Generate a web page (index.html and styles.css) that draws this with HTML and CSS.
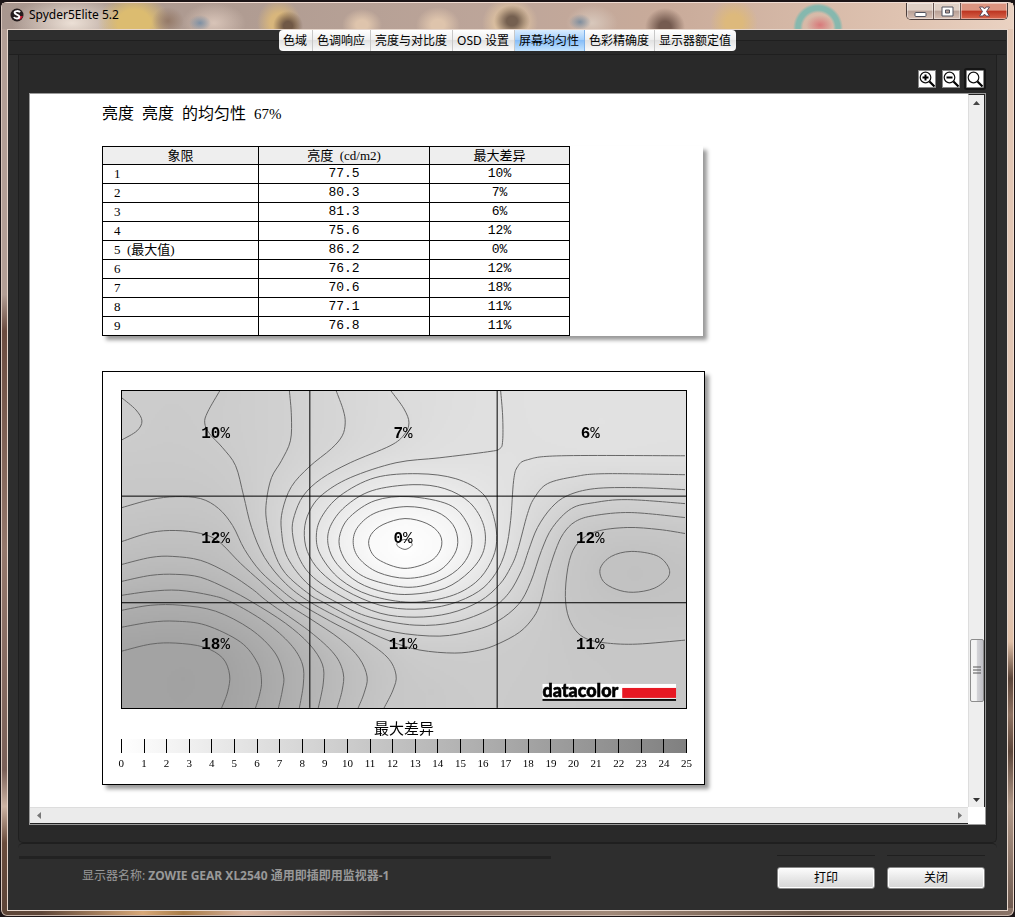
FILE: index.html
```html
<!DOCTYPE html>
<html lang="zh-CN">
<head>
<meta charset="utf-8">
<title>Spyder5Elite 5.2</title>
<link rel="stylesheet" href="styles.css">
</head>
<body>
<div class="window">
  <header class="titlebar">
    <svg class="app-icon" viewBox="0 0 14 14" aria-hidden="true">
      <circle cx="7" cy="7" r="6.5" fill="#231c1d"/>
      <path d="M8 8h5a6 6 0 0 1-4 4z" fill="#c0142c"/>
      <path d="M10 4.2C9 2.6 4.6 2.6 4.600 4.800C4.600 6.800 9.400 6.400 9.400 8.800C9.400 11 4.800 11 4 9" fill="none" stroke="#fff" stroke-width="1.900"/>
    </svg>
    <h1 class="app-title">Spyder5Elite 5.2</h1>
    <div class="controls">
      <button class="control" aria-label="最小化"><svg viewBox="0 0 13 13"><rect x="1" y="7.500" width="11" height="4" rx="1" fill="#fff" stroke="#50525e"/></svg></button>
      <button class="control" aria-label="最大化"><svg viewBox="0 0 13 13"><path d="M1 2h11v9H1z" fill="#fff" stroke="#50525e"/><path d="M4.500 5h4v3h-4z" fill="#b59c92" stroke="#50525e"/></svg></button>
      <button class="control control-close" aria-label="关闭窗口"><svg viewBox="0 0 13 13"><path d="M1.500 2h3.500l1.500 2L8 2h3.500L8.500 6.500l3 4.500H8L6.500 9 5 11H1.500l3-4.500z" fill="#fff" stroke="#504050" stroke-width=".9"/></svg></button>
    </div>
  </header>

  <main class="client">
    <nav class="tabs">
      <button class="tab">色域</button>
      <button class="tab">色调响应</button>
      <button class="tab">亮度与对比度</button>
      <button class="tab">OSD 设置</button>
      <button class="tab tab-active" aria-current="page">屏幕均匀性</button>
      <button class="tab">色彩精确度</button>
      <button class="tab">显示器额定值</button>
    </nav>

    <section class="panel">
      <div class="zoom-tools">
        <button class="zoom" aria-label="放大"><svg viewBox="0 0 16 16"><circle cx="6.500" cy="6.500" r="5.300" fill="none" stroke="#111" stroke-width="1.200"/><path d="M3.500 6.500h6M6.500 3.500v6" stroke="#000" stroke-width="2"/><path d="M10.500 10.500l5 5" stroke="#000" stroke-width="2.200"/></svg></button>
        <button class="zoom" aria-label="缩小"><svg viewBox="0 0 16 16"><circle cx="6.500" cy="6.500" r="5.300" fill="none" stroke="#111" stroke-width="1.200"/><path d="M3.500 6.500h6" stroke="#000" stroke-width="2"/><path d="M10.500 10.500l5 5" stroke="#000" stroke-width="2.200"/></svg></button>
        <button class="zoom zoom-focus" aria-label="原始大小"><svg viewBox="0 0 16 16"><circle cx="6.500" cy="6.500" r="5.300" fill="none" stroke="#111" stroke-width="1.200"/><path d="M10.500 10.500l5 5" stroke="#000" stroke-width="2.200"/></svg></button>
      </div>

      <div class="viewer">
        <div class="report">
          <h2 class="report-title">亮度&ensp;亮度&ensp;的均匀性&ensp;<span class="latin">67%</span></h2>

          <div class="table-card">
            <table class="results">
              <thead><tr><th>象限</th><th>亮度&ensp;(cd/m2)</th><th>最大差异</th></tr></thead>
              <tbody>
                <tr><td>1</td><td>77.5</td><td>10%</td></tr>
                <tr><td>2</td><td>80.3</td><td>7%</td></tr>
                <tr><td>3</td><td>81.3</td><td>6%</td></tr>
                <tr><td>4</td><td>75.6</td><td>12%</td></tr>
                <tr><td>5&ensp;(最大值)</td><td>86.2</td><td>0%</td></tr>
                <tr><td>6</td><td>76.2</td><td>12%</td></tr>
                <tr><td>7</td><td>70.6</td><td>18%</td></tr>
                <tr><td>8</td><td>77.1</td><td>11%</td></tr>
                <tr><td>9</td><td>76.8</td><td>11%</td></tr>
              </tbody>
            </table>
          </div>

          <figure class="chart-card">
            <div class="map">
              <canvas class="map-shade" id="shade" width="283" height="159"></canvas>
              <svg class="map-lines" viewBox="121 390 566 318">
                <g id="contours" class="contours"></g>
                <path class="grid-lines" d="M309.500 390v318M497.500 390v318M121 495.500h566M121 602.500h566"/>
                <g class="map-labels">
                  <text x="215" y="437">10<tspan class="pct">%</tspan></text>
                  <text x="403" y="437">7<tspan class="pct">%</tspan></text>
                  <text x="591" y="437">6<tspan class="pct">%</tspan></text>
                  <text x="215" y="543">12<tspan class="pct">%</tspan></text>
                  <text x="403" y="543">0<tspan class="pct">%</tspan></text>
                  <text x="591" y="543">12<tspan class="pct">%</tspan></text>
                  <text x="215" y="649">18<tspan class="pct">%</tspan></text>
                  <text x="403" y="649">11<tspan class="pct">%</tspan></text>
                  <text x="591" y="649">11<tspan class="pct">%</tspan></text>
                </g>
                <rect x="543" y="684" width="134" height="15" fill="#fff"/>
                <rect x="623" y="688" width="54" height="10" fill="#e71823"/>
                <rect x="543" y="699" width="134" height="2" fill="#0b0b0b"/>
                <text class="brand" x="543" y="697">datacolor</text>
              </svg>
            </div>
            <figcaption class="legend-title">最大差异</figcaption>
            <div class="legend-bar" id="legend-bar"></div>
            <div class="legend-labels" id="legend-labels"></div>
          </figure>
        </div>
        <div class="vscroll">
          <button class="arrow" aria-label="向上滚动"><svg viewBox="0 0 7 4"><path d="M0 4l3.500-4L7 4z" fill="#444"/></svg></button>
          <div class="thumb"><svg viewBox="0 0 8 9"><path d="M0 1h8M0 4h8M0 7h8" stroke="#555"/></svg></div>
          <button class="arrow" aria-label="向下滚动"><svg viewBox="0 0 7 4"><path d="M0 0l3.500 4L7 0z" fill="#333"/></svg></button>
        </div>
        <div class="hscroll">
          <button class="arrow" aria-label="向左滚动"><svg class="side" viewBox="0 0 4 7"><path d="M4 0L0 3.500 4 7z" fill="#777"/></svg></button>
          <button class="arrow" aria-label="向右滚动"><svg class="side" viewBox="0 0 4 7"><path d="M0 0l4 3.500L0 7z" fill="#777"/></svg></button>
        </div>
      </div>
    </section>

    <footer class="footer">
      <p class="monitor">显示器名称: <b>ZOWIE GEAR XL2540 通用即插即用监视器-1</b></p>
      <div class="actions">
        <div class="action"><button class="btn">打印</button></div>
        <div class="action"><button class="btn">关闭</button></div>
      </div>
    </footer>
  </main>
</div>
<script src="chart.js"></script>
</body>
</html>
```
FILE: styles.css
```css
* { box-sizing: border-box; }
body {
  margin: 0;
  background: #1b1416;
  font: 12px/16px "Noto Sans", "Noto Sans CJK SC", sans-serif;
  color: #000;
}
button { font: inherit; color: inherit; padding: 0; margin: 0; }
h1, h2, p, figure { margin: 0; }

.window {
  min-height: 100vh;
  display: flex;
  flex-direction: column;
  padding: 0 6px 5px;
  border: 1px solid #1b1416;
  border-top-width: 2px;
  border-radius: 7px;
  box-shadow: inset 0 1px #f0dcd2, inset 1px 0 #d8c6bc, inset -1px 0 #f0dcd0, inset 0 -1px #c8b6ac;
  background:
    linear-gradient(90deg, #5e4638 0 4%, #d8a878 14%, #a87c48 18%, #d6b09a 24%, #8c7468 38%, #a08878 60%, #6b5648 80%, #8a7468) bottom / 100% 8px no-repeat,
    linear-gradient(#b39f96 0 32%, #6b4c40 36%, #94786c 60%, #7a6058 84%, #cdb4a4 88%, #6a4c3c 92%, #5c4438) left / 8px 100% no-repeat,
    linear-gradient(#e2c6b4 0 66%, #e0bfa6 70%, #5c463a 74%, #8e7262 78%, #5c463a 82%, #b09888 88%, #6a564c) right / 8px 100% no-repeat,
    #c4a898;
}
.titlebar {
  height: 26px;
  display: flex;
  align-items: flex-start;
  margin: 1px -5px 0;
  padding-left: 7px;
  background:
    radial-gradient(circle at 816px 25px, transparent 0 15px, #86b8ae 18px 22px, transparent 25px),
    radial-gradient(ellipse 14px 10px at 818px 22px, #d8797a, transparent),
    radial-gradient(ellipse 20px 19px at 663px 24px, #755b50 30%, transparent),
    radial-gradient(ellipse 11px 8px at 578px 19px, #7f8e9e, transparent),
    radial-gradient(ellipse 26px 18px at 590px 20px, #d8c8bc, transparent),
    radial-gradient(ellipse 18px 16px at 510px 18px, #756050 30%, transparent),
    radial-gradient(ellipse 28px 26px at 508px 20px, #dcc0a0 50%, transparent),
    radial-gradient(ellipse 22px 18px at 436px 22px, #dec4ac 30%, transparent),
    radial-gradient(ellipse 20px 16px at 360px 22px, #dec4ac 30%, transparent),
    radial-gradient(ellipse 15px 15px at 286px 23px, #705846 30%, transparent),
    radial-gradient(ellipse 22px 24px at 277px 20px, #d8b67c 40%, transparent),
    radial-gradient(ellipse 11px 8px at 198px 20px, #7d90a4, transparent),
    radial-gradient(ellipse 32px 20px at 212px 20px, #d8c4b8, transparent),
    radial-gradient(ellipse 16px 14px at 166px 18px, #957a68, transparent),
    radial-gradient(ellipse 36px 30px at 132px 20px, #dcbc70 45%, transparent),
    radial-gradient(ellipse 24px 24px at 732px 20px, #ddb97c 35%, transparent),
    radial-gradient(ellipse 60px 28px at 70px 20px, #ece0d6, transparent),
    linear-gradient(90deg, #a8968e, #b09c92 24%, #bea69a 50%, #c9ab9a 66%, #e0c4b2 90%, #ead2c2);
}
.app-icon { width: 14px; height: 14px; margin: 5px 5px 0 1px; }
.app-title { flex: 1; font-size: 12px; line-height: 24px; font-weight: 400; }
.controls { display: flex; margin-right: 5px; border: 1px solid #4c3e3c; border-top: 0; border-radius: 0 0 5px 5px; overflow: hidden; }
.control {
  width: 27px;
  height: 16px;
  display: grid;
  place-items: center;
  border: 0;
  border-right: 1px solid #6a5652;
  background: linear-gradient(#e0d0c6 0 45%, #b8a096 50%, #d8c0b4);
  box-shadow: inset 0 0 0 1px #ffffff66;
}
.control svg { width: 13px; height: 13px; }
.control-close { width: 46px; border: 0; background: linear-gradient(#dc9480 0 45%, #bc3420 50%, #d8664c); }

.client {
  flex: 1;
  display: flex;
  flex-direction: column;
  border: 1px solid #e6d6cc;
  background: #2e2e2e;
}
.tabs {
  display: flex;
  justify-content: center;
  padding: 0 0 4px;
  margin: 0 1px;
  background: linear-gradient(#2e2e2e 10px, #1f1f1f 10px 11px, #292929 11px 24px, #1f1f1f 24px);
}
.tab {
  height: 21px;
  padding: 0 5px 0 4px;
  border: 0;
  border-right: 1px solid #c8c8c8;
  white-space: nowrap;
  line-height: 20px;
  background: linear-gradient(#fff, #f0f0f0 45%, #e2e2e2 50%, #fafafa);
}
.tab:first-child { border-radius: 4px 0 0 4px; }
.tab:last-child { border-right: 0; border-radius: 0 4px 4px 0; }
.tab-active { background: linear-gradient(#d8ecff, #a6d0fb 45%, #86bdf8 50%, #c4e4ff); border-color: #7fb2ea; }

.panel {
  flex: 1;
  display: flex;
  flex-direction: column;
  margin: 0 10px;
  padding: 13px 10px 17px;
  background: #292929;
  border: 1px solid #1f1f1f;
  border-top: 0;
  border-radius: 0 0 5px 5px;
}
.zoom-tools { display: flex; justify-content: flex-end; gap: 6px; margin: 2px 2px 5px; }
.zoom { width: 18px; height: 18px; border: 1px solid #888; background: #fff; }
.zoom svg { display: block; width: 16px; height: 16px; }
.zoom-focus { box-shadow: 0 0 0 2px #151515; border-radius: 1px; }

.viewer {
  flex: 1;
  display: grid;
  grid-template: minmax(0, 1fr) 17px / minmax(0, 1fr) 17px;
  border: 1px solid #9a9a9a;
  background: #fff;
}
.report { padding: 10px 72px 20px; }
.report-title { font: 400 16px/20px "Liberation Serif", "Noto Sans CJK SC", serif; }
.latin { font-size: 15px; }

.table-card { max-width: 601px; margin-top: 22px; box-shadow: 4px 4px 4px #999; background: #fff; }
.results { width: 468px; border-collapse: collapse; table-layout: fixed; font: 13px/16px "Liberation Mono", "Noto Sans CJK SC", monospace; }
.results th, .results td { height: 19px; padding: 0; border: 1px solid #000; text-align: center; line-height: 16px; }
.results th { height: 18px; background: #eee; font-weight: 400; font-family: "Liberation Serif", "Noto Sans CJK SC", serif; }
.results th:nth-child(1) { width: 156px; }
.results th:nth-child(2) { width: 171px; }
.results td:first-child { text-align: left; padding-left: 11px; font-family: "Liberation Serif", "Noto Sans CJK SC", serif; }

.chart-card {
  max-width: 603px;
  margin-top: 35px;
  padding: 18px 17px 14px 18px;
  border: 1px solid #000;
  background: #fff;
  box-shadow: 4px 4px 4px #999;
}
.map { display: grid; border: 1px solid #000; overflow: hidden; }
.map-shade, .map-lines { grid-area: 1 / 1; display: block; width: 100%; height: auto; aspect-ratio: 566 / 318; }
.contours { fill: none; stroke: #666; stroke-width: 1; }
.grid-lines { fill: none; stroke: #000; stroke-width: 1; }
.map-labels { font: 700 16px "Liberation Mono", monospace; text-anchor: middle; }
.pct { font-weight: 400; }
.brand { font: 900 18px Lato, sans-serif; stroke: #000; stroke-width: 0.6px; }
.legend-title { margin-top: 8px; text-align: center; font: 400 15px/22px "Noto Sans CJK SC", sans-serif; }
.legend-bar { display: flex; height: 14px; background: linear-gradient(90deg, #fff, #808080); border-right: 1px solid #000; }
.legend-bar i { flex: 1; border-left: 1px solid #000; }
.legend-labels { display: flex; margin: 4px -11px 0; font: 11px/13px "Liberation Serif", serif; }
.legend-labels span { flex: 1; text-align: center; }

.vscroll { display: flex; flex-direction: column; align-items: center; border-left: 1px solid #ddd; border-right: 1px solid #222; border-top: 1px solid #222; background: #eee; }
.hscroll { display: flex; justify-content: space-between; border-top: 1px solid #ddd; border-bottom: 1px solid #222; background: #ebebeb; }
.arrow { width: 14px; height: 15px; flex: none; display: grid; place-items: center; border: 0; background: none; }
.arrow svg { width: 7px; height: 4px; }
.arrow .side { width: 4px; height: 7px; }
.hscroll .arrow { width: 17px; }
.thumb { width: 14px; height: 63px; margin: auto 0 90px; display: grid; place-items: center; border: 1px solid #8c8c8c; border-radius: 2px; background: linear-gradient(90deg, #f4f4f4 45%, #d4d4d8 50%, #c0c0c6); }
.thumb svg { width: 8px; height: 9px; }

.footer {
  display: flex;
  justify-content: space-between;
  align-items: flex-start;
  height: 67px;
  margin: 0 10px;
  padding: 3px 12px 0 1px;
  border-radius: 5px;
  border-top: 1px solid #1f1f1f;
}
.monitor { padding: 21px 0 0 63px; color: #999; background: linear-gradient(#222 0 0) 0 9px / 532px 3px no-repeat; min-width: 532px; white-space: nowrap; }
.actions { display: flex; gap: 12px; padding-top: 8px; }
.action { padding-top: 11px; border-top: 1px solid #1f1f1f; }
.btn { display: block; width: 98px; height: 22px; border: 1px solid #888; border-radius: 3px; background: linear-gradient(#fdfdfd, #e8e8e8 50%, #d6d6d6); box-shadow: inset 0 0 0 1px #fff; }
```
FILE: chart.js
```js
// Contour polylines of the uniformity map: [level %, closed, points...]
const contours = [
  [10, 0, 121,397, 135,409, 141,420, 136,430, 121,439],
  [10, 0, 219,390, 207,411, 204,422, 209,433, 222,447, 235,465, 243,495, 251,527, 264,557, 285,583, 310,602, 350,623, 390,641, 420,650, 455,653, 480,650, 498,644, 520,632, 534,617, 541,602, 548,575, 556,550, 564,533, 576,521, 595,515, 632,512, 686,517],
  [9, 0, 289,390, 291,415, 290,440, 281,460, 271,477, 266,500, 266,520, 273,550, 285,573, 309,594, 323,602, 360,621, 395,632, 440,636, 475,630, 498,621, 519,604, 531,582, 542,550, 553,527, 572,508, 595,502, 628,499, 686,503],
  [8, 0, 336,390, 343,409, 345,422, 342,435, 331,448, 309,466, 291,486, 282,510, 281,530, 287,557, 309,585, 340,604, 370,617, 415,625, 455,622, 490,609, 509,593, 522,570, 529,550, 538,527, 552,507, 568,495, 595,488, 638,487, 686,489],
  [7, 0, 391,390, 404,408, 409,422, 404,434, 390,445, 350,462, 321,478, 303,495, 294,515, 292,532, 298,556, 313,577, 345,598, 380,613, 415,617, 450,613, 480,601, 500,584, 511,567, 518,550, 528,513, 535,497, 548,483, 575,476, 605,473, 686,474],
  [6, 0, 501,390, 503,415, 503,440, 500,448, 488,451, 440,457, 396,462, 350,477, 322,494, 309,511, 304,530, 307,551, 320,571, 345,590, 380,605, 415,609, 450,604, 479,591, 496,573, 506,550, 511,520, 514,480, 518,466, 528,459, 562,455, 686,455],
  [5, 1, 418,473, 375,477, 340,495, 321,517, 316,537, 321,556, 340,579, 370,595, 411,602, 450,596, 476,582, 491,562, 497,541, 494,516, 483,493, 456,478],
  [4, 1, 413,484, 372,490, 345,506, 330,526, 328,545, 337,564, 358,582, 385,592, 412,594, 445,588, 470,571, 484,550, 484,525, 470,502, 445,488],
  [3, 1, 409,496, 375,500, 350,516, 340,533, 340,549, 350,566, 370,579, 408,587, 440,580, 462,565, 472,544, 467,522, 449,504],
  [2, 1, 407,506, 376,512, 358,526, 353,542, 359,558, 378,572, 407,578, 436,572, 452,558, 458,542, 453,524, 436,511],
  [1, 1, 405,518, 383,524, 371,534, 369,546, 378,559, 404,568, 430,561, 441,548, 440,534, 427,523],
  [0, 1, 405,539, 399,541, 397,545, 405,549, 412,545, 410,541],
  [11, 0, 121,507, 150,499, 175,496, 200,498, 218,508, 232,525, 244,549, 260,571, 280,589, 297,602, 330,621, 360,637, 387,657, 396,675, 393,690, 384,708],
  [12, 0, 121,541, 150,532, 175,530, 200,533, 218,541, 240,563, 260,581, 284,602, 309,618, 340,639, 359,658, 367,677, 364,693, 358,708],
  [13, 0, 121,564, 150,557, 172,556, 200,560, 228,573, 252,589, 268,602, 309,631, 334,654, 343,673, 342,690, 337,708],
  [14, 0, 121,581, 150,575, 175,574, 200,577, 228,589, 252,602, 285,623, 309,644, 322,664, 323,683, 318,708],
  [15, 0, 121,595, 150,591, 178,590, 210,595, 231,602, 265,622, 290,644, 302,664, 303,684, 299,708],
  [16, 0, 121,610, 150,605, 180,605, 215,611, 250,629, 274,652, 283,675, 282,690, 278,708],
  [17, 0, 121,627, 150,622, 175,621, 205,625, 240,642, 257,663, 261,681, 259,695, 255,708],
  [18, 0, 121,651, 150,644, 175,643, 203,647, 222,658, 229,675, 227,692, 221,708],
  [11, 0, 686,533, 660,529, 628,527, 597,531, 579,542, 570,560, 566,590, 568,613, 576,630, 588,639, 608,643, 638,644, 686,640],
  [12, 1, 632,551, 612,556, 601,568, 604,581, 617,589, 634,592, 655,588, 669,577, 669,566, 657,555]
];
// Known extremes between contours: x, y, level
const seeds = [[405,544,0], [180,677,18.4], [635,571,12.2], [600,420,5.6], [560,680,10.6], [430,690,10.8], [165,425,10.3]];

// Smooth path through the points (Catmull-Rom as cubic segments)
function smoothPath(c) {
  const pts = [];
  for (let i = 2; i < c.length; i += 2) pts.push([c[i], c[i + 1]]);
  const n = pts.length, closed = c[1];
  const at = i => closed ? pts[(i + n) % n] : pts[Math.max(0, Math.min(n - 1, i))];
  let d = `M${pts[0]}`;
  for (let i = 0; i < (closed ? n : n - 1); i++) {
    const [a, b, e, f] = [at(i - 1), at(i), at(i + 1), at(i + 2)];
    d += `C${b[0] + (e[0] - a[0]) / 6} ${b[1] + (e[1] - a[1]) / 6} ${e[0] - (f[0] - b[0]) / 6} ${e[1] - (f[1] - b[1]) / 6} ${e[0]} ${e[1]}`;
  }
  return d;
}

// Relax a surface that is pinned on the contours, then shade it
const W = 283, H = 159;
const field = new Float32Array(W * H).fill(9);
const pinned = new Uint8Array(W * H);
function pin(x, y, v) {
  const i = Math.max(0, Math.min(W - 1, Math.round((x - 121) / 2)));
  const j = Math.max(0, Math.min(H - 1, Math.round((y - 390) / 2)));
  field[j * W + i] = v;
  pinned[j * W + i] = 1;
}
const group = document.getElementById('contours');
for (const c of contours) {
  const path = document.createElementNS('http://www.w3.org/2000/svg', 'path');
  path.setAttribute('d', smoothPath(c));
  group.append(path);
  const length = path.getTotalLength();
  for (let s = 0; s <= length; s += 1) {
    const p = path.getPointAtLength(s);
    pin(p.x, p.y, c[0]);
  }
}
seeds.forEach(s => pin(...s));
for (let k = 0; k < 500; k++) {
  for (let j = 0; j < H; j++) {
    for (let i = 0; i < W; i++) {
      const q = j * W + i;
      if (pinned[q]) continue;
      const mean = (field[i ? q - 1 : q + 1] + field[i < W - 1 ? q + 1 : q - 1] +
                    field[j ? q - W : q + W] + field[j < H - 1 ? q + W : q - W]) / 4;
      field[q] += 1.8 * (mean - field[q]);
    }
  }
}
const ctx = document.getElementById('shade').getContext('2d');
const image = ctx.createImageData(W, H);
field.forEach((v, q) => {
  const g = 255 - v * 5.1;
  image.data.set([g, g, g, 255], q * 4);
});
ctx.putImageData(image, 0, 0);

const bar = document.getElementById('legend-bar');
const labels = document.getElementById('legend-labels');
for (let i = 0; i <= 25; i++) {
  if (i < 25) bar.append(document.createElement('i'));
  const label = document.createElement('span');
  label.textContent = i;
  labels.append(label);
}
```
